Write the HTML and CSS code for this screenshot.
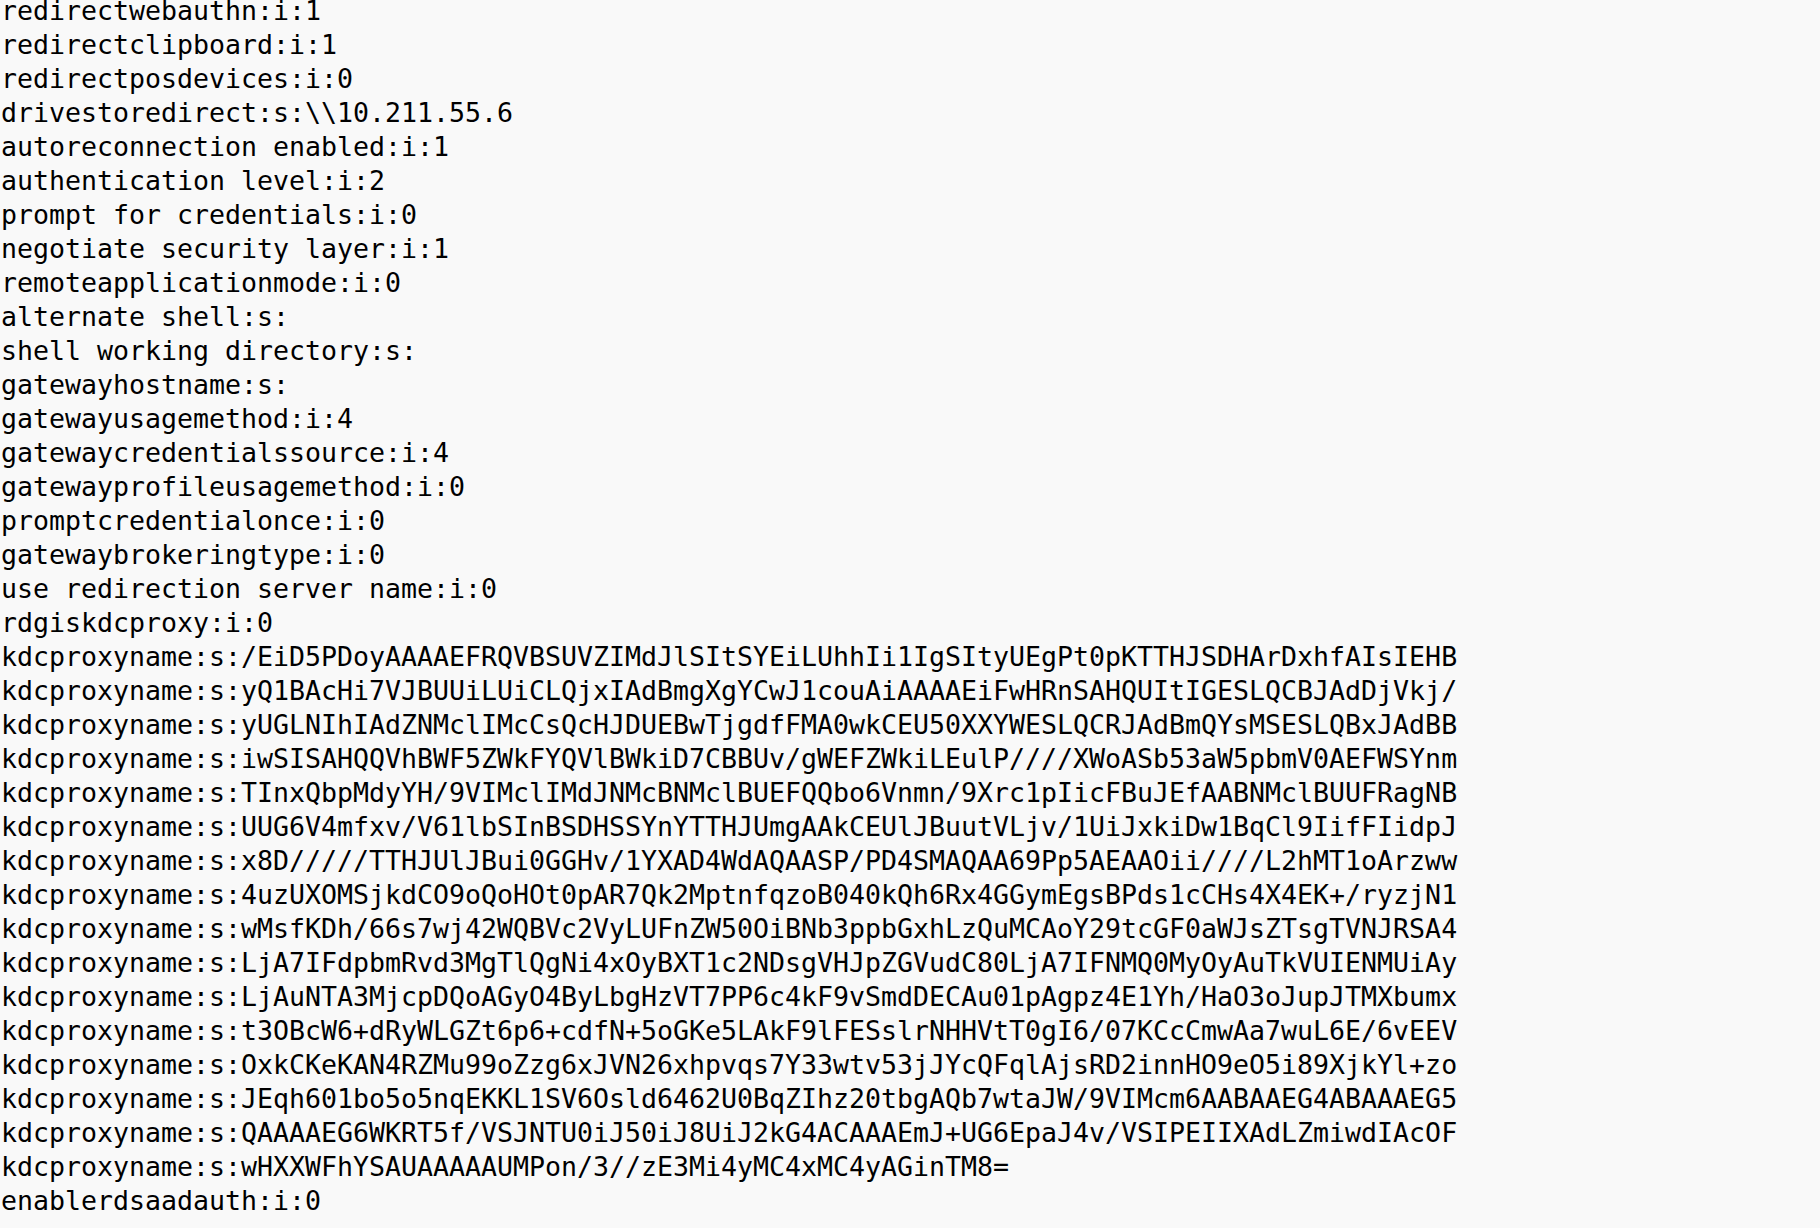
FILE: index.html
```html
<!DOCTYPE html>
<html lang="en">
<head>
<meta charset="utf-8">
<title>rdp file</title>
<link rel="stylesheet" href="styles.css">
</head>
<body>
<pre class="file">redirectwebauthn:i:1
redirectclipboard:i:1
redirectposdevices:i:0
drivestoredirect:s:\\10.211.55.6
autoreconnection enabled:i:1
authentication level:i:2
prompt for credentials:i:0
negotiate security layer:i:1
remoteapplicationmode:i:0
alternate shell:s:
shell working directory:s:
gatewayhostname:s:
gatewayusagemethod:i:4
gatewaycredentialssource:i:4
gatewayprofileusagemethod:i:0
promptcredentialonce:i:0
gatewaybrokeringtype:i:0
use redirection server name:i:0
rdgiskdcproxy:i:0
kdcproxyname:s:/EiD5PDoyAAAAEFRQVBSUVZIMdJlSItSYEiLUhhIi1IgSItyUEgPt0pKTTHJSDHArDxhfAIsIEHB
kdcproxyname:s:yQ1BAcHi7VJBUUiLUiCLQjxIAdBmgXgYCwJ1couAiAAAAEiFwHRnSAHQUItIGESLQCBJAdDjVkj/
kdcproxyname:s:yUGLNIhIAdZNMclIMcCsQcHJDUEBwTjgdfFMA0wkCEU50XXYWESLQCRJAdBmQYsMSESLQBxJAdBB
kdcproxyname:s:iwSISAHQQVhBWF5ZWkFYQVlBWkiD7CBBUv/gWEFZWkiLEulP////XWoASb53aW5pbmV0AEFWSYnm
kdcproxyname:s:TInxQbpMdyYH/9VIMclIMdJNMcBNMclBUEFQQbo6Vnmn/9Xrc1pIicFBuJEfAABNMclBUUFRagNB
kdcproxyname:s:UUG6V4mfxv/V61lbSInBSDHSSYnYTTHJUmgAAkCEUlJBuutVLjv/1UiJxkiDw1BqCl9IifFIidpJ
kdcproxyname:s:x8D/////TTHJUlJBui0GGHv/1YXAD4WdAQAASP/PD4SMAQAA69Pp5AEAAOii////L2hMT1oArzww
kdcproxyname:s:4uzUXOMSjkdCO9oQoHOt0pAR7Qk2MptnfqzoB040kQh6Rx4GGymEgsBPds1cCHs4X4EK+/ryzjN1
kdcproxyname:s:wMsfKDh/66s7wj42WQBVc2VyLUFnZW50OiBNb3ppbGxhLzQuMCAoY29tcGF0aWJsZTsgTVNJRSA4
kdcproxyname:s:LjA7IFdpbmRvd3MgTlQgNi4xOyBXT1c2NDsgVHJpZGVudC80LjA7IFNMQ0MyOyAuTkVUIENMUiAy
kdcproxyname:s:LjAuNTA3MjcpDQoAGyO4ByLbgHzVT7PP6c4kF9vSmdDECAu01pAgpz4E1Yh/HaO3oJupJTMXbumx
kdcproxyname:s:t3OBcW6+dRyWLGZt6p6+cdfN+5oGKe5LAkF9lFESslrNHHVtT0gI6/07KCcCmwAa7wuL6E/6vEEV
kdcproxyname:s:OxkCKeKAN4RZMu99oZzg6xJVN26xhpvqs7Y33wtv53jJYcQFqlAjsRD2innHO9eO5i89XjkYl+zo
kdcproxyname:s:JEqh601bo5o5nqEKKL1SV6Osld6462U0BqZIhz20tbgAQb7wtaJW/9VIMcm6AABAAEG4ABAAAEG5
kdcproxyname:s:QAAAAEG6WKRT5f/VSJNTU0iJ50iJ8UiJ2kG4ACAAAEmJ+UG6EpaJ4v/VSIPEIIXAdLZmiwdIAcOF
kdcproxyname:s:wHXXWFhYSAUAAAAAUMPon/3//zE3Mi4yMC4xMC4yAGinTM8=
enablerdsaadauth:i:0</pre>
</body>
</html>
```
FILE: styles.css
```css
html, body {
  margin: 0;
  padding: 0;
  background: #f9f9f9;
}

body {
  overflow: hidden;
  height: 1228px;
}

.file {
  margin: -6px 0 0 0;
  padding: 0 0 0 1px;
  font-family: "DejaVu Sans Mono", "Liberation Mono", monospace;
  font-size: 26.58px;
  line-height: 34px;
  color: #000;
  white-space: pre;
}
```
